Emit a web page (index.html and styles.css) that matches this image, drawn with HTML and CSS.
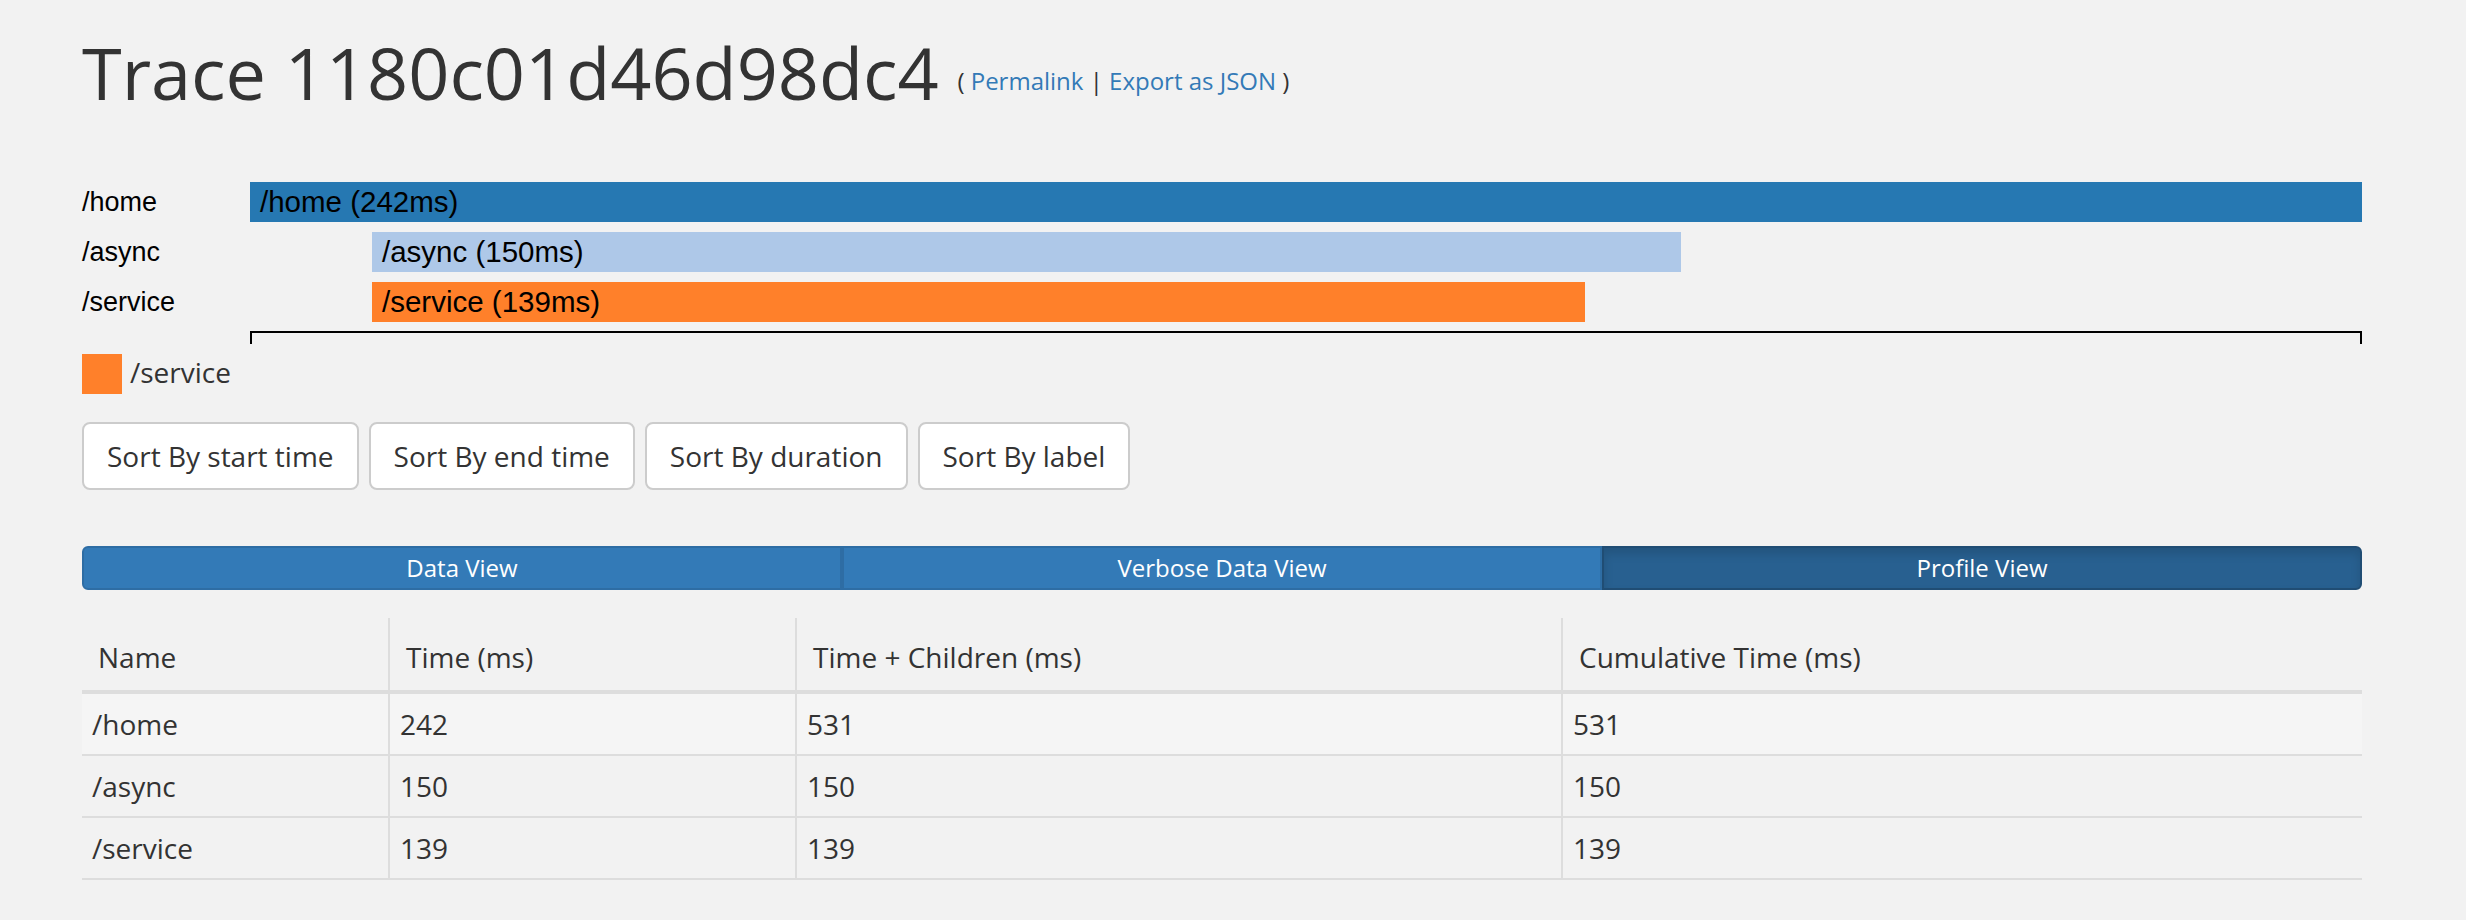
FILE: index.html
```html
<!DOCTYPE html>
<html>
<head>
<meta charset="utf-8">
<title>Trace 1180c01d46d98dc4</title>
<link rel="stylesheet" href="styles.css">
</head>
<body>
<div class="page">
  <h1 class="title">Trace 1180c01d46d98dc4 <small class="links">( <a href="#">Permalink</a> | <a href="#">Export as JSON</a> )</small></h1>

  <div class="chart">
    <div class="chart-row">
      <div class="chart-label">/home</div>
      <div class="track"><div class="bar bar-home" style="margin-left:0;width:2112px">/home (242ms)</div></div>
    </div>
    <div class="chart-row">
      <div class="chart-label">/async</div>
      <div class="track"><div class="bar bar-async" style="margin-left:122px;width:1309px">/async (150ms)</div></div>
    </div>
    <div class="chart-row">
      <div class="chart-label">/service</div>
      <div class="track"><div class="bar bar-service" style="margin-left:122px;width:1213px">/service (139ms)</div></div>
    </div>
    <div class="axis"></div>
  </div>

  <div class="legend">
    <span class="swatch"></span>
    <span class="legend-text">/service</span>
  </div>

  <div class="sorts">
    <button class="btn">Sort By start time</button>
    <button class="btn">Sort By end time</button>
    <button class="btn">Sort By duration</button>
    <button class="btn">Sort By label</button>
  </div>

  <div class="tabs">
    <button class="tab tab-first">Data View</button>
    <button class="tab">Verbose Data View</button>
    <button class="tab tab-last tab-active">Profile View</button>
  </div>

  <table class="data">
    <thead>
      <tr>
        <th class="c1">Name</th>
        <th class="c2">Time (ms)</th>
        <th class="c3">Time + Children (ms)</th>
        <th class="c4">Cumulative Time (ms)</th>
      </tr>
    </thead>
    <tbody>
      <tr class="odd"><td>/home</td><td>242</td><td>531</td><td>531</td></tr>
      <tr><td>/async</td><td>150</td><td>150</td><td>150</td></tr>
      <tr><td>/service</td><td>139</td><td>139</td><td>139</td></tr>
    </tbody>
  </table>
</div>
</body>
</html>
```

FILE: styles.css
```css
html, body {
  margin: 0;
  padding: 0;
  background: #f2f2f2;
}

body {
  font-family: "Open Sans", "DejaVu Sans", sans-serif;
  font-size: 28px;
  line-height: 40px;
  color: #333;
}

.page {
  width: 2280px;
  padding-left: 82px;
}

.title {
  margin: 32px 0 0;
  font-size: 72px;
  line-height: 80px;
  font-weight: 400;
  color: #333;
  white-space: nowrap;
}

.links {
  font-size: 24px;
  line-height: 24px;
  color: #333;
  vertical-align: 10px;
}

.links a {
  color: #337ab7;
  text-decoration: none;
}

.chart {
  margin-top: 70px;
  display: flex;
  flex-direction: column;
  gap: 10px;
}

.chart-row {
  display: flex;
  height: 40px;
}

.chart-label {
  width: 168px;
  flex: none;
  font-family: "Liberation Sans", Arial, sans-serif;
  font-size: 27px;
  line-height: 40px;
  color: #000;
}

.track {
  width: 2112px;
  display: flex;
}

.bar {
  height: 40px;
  box-sizing: border-box;
  padding-left: 10px;
  font-family: "Liberation Sans", Arial, sans-serif;
  font-size: 29.5px;
  line-height: 40px;
  color: #000;
  white-space: nowrap;
  overflow: hidden;
}

.bar-home { background: #2678b2; }
.bar-async { background: #aec8e8; }
.bar-service { background: #ff802a; }

.axis {
  margin-top: -1px;
  margin-left: 168px;
  width: 2112px;
  height: 13px;
  box-sizing: border-box;
  border: 2px solid #000;
  border-bottom: 0;
}

.legend {
  margin-top: 10px;
  display: flex;
  align-items: center;
  gap: 8px;
  height: 40px;
}

.swatch {
  width: 40px;
  height: 40px;
  background: #ff802a;
}

.legend-text {
  line-height: 40px;
  margin-top: -4px;
}

.sorts {
  margin-top: 28px;
  display: flex;
  gap: 10px;
}

.btn {
  font-family: "Open Sans", "DejaVu Sans", sans-serif;
  font-size: 28px;
  line-height: 40px;
  padding: 12px 23px;
  border: 2px solid #ccc;
  border-radius: 8px;
  background: #fff;
  color: #333;
  margin: 0;
}

.tabs {
  margin-top: 56px;
  display: flex;
  width: 2280px;
}

.tab {
  flex: 1 1 0;
  margin: 0;
  font-family: "Open Sans", "DejaVu Sans", sans-serif;
  font-size: 24px;
  line-height: 36px;
  padding: 2px 10px;
  border: 2px solid #2e6da4;
  background: #337ab7;
  color: #fff;
  border-radius: 0;
}

.tab-first {
  border-radius: 6px 0 0 6px;
}

.tab-last {
  border-radius: 0 6px 6px 0;
}

.tab-active {
  background: #286090;
  border-color: #204d74;
  box-shadow: inset 0 6px 10px rgba(0, 0, 0, 0.125);
}

.data {
  margin-top: 28px;
  width: 2280px;
  border-collapse: separate;
  border-spacing: 0;
  table-layout: fixed;
}

.data th,
.data td {
  box-sizing: border-box;
  text-align: left;
  font-weight: 400;
  color: #333;
  line-height: 40px;
}

.data th {
  padding: 19px 16px 13px;
  border-bottom: 4px solid #ddd;
  vertical-align: bottom;
}

.data td {
  padding: 10px;
  border-bottom: 2px solid #ddd;
}

.data th + th,
.data td + td {
  border-left: 2px solid #ddd;
}

.data .c1 { width: 306px; }
.data .c2 { width: 407px; }
.data .c3 { width: 766px; }

.data tr.odd td {
  background: #f5f5f5;
}
```
